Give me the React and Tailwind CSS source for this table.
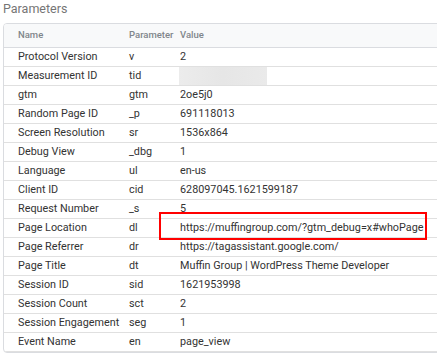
export default function App() {
  const rows = [
    ["Protocol Version", "v", "2"],
    ["Measurement ID", "tid", null],
    ["gtm", "gtm", "2oe5j0"],
    ["Random Page ID", "_p", "691118013"],
    ["Screen Resolution", "sr", "1536x864"],
    ["Debug View", "_dbg", "1"],
    ["Language", "ul", "en-us"],
    ["Client ID", "cid", "628097045.1621599187"],
    ["Request Number", "_s", "5"],
    ["Page Location", "dl", "https://muffingroup.com/?gtm_debug=x#whoPage"],
    ["Page Referrer", "dr", "https://tagassistant.google.com/"],
    ["Page Title", "dt", "Muffin Group | WordPress Theme Developer"],
    ["Session ID", "sid", "1621953998"],
    ["Session Count", "sct", "2"],
    ["Session Engagement", "seg", "1"],
    ["Event Name", "en", "page_view"],
  ];
  return (
    <div
      className="relative w-[437px] h-[354px] overflow-hidden bg-white"
      style={{ fontFamily: "Roboto, 'Noto Sans', sans-serif" }}
    >
      <div className="pl-[3px] pt-[1px] h-[23px] text-[12.5px] leading-[16px] text-[#757575]">
        Parameters
      </div>
      <div className="ml-[3px] w-[440px] border border-[#dadce0] rounded-[4px] overflow-hidden">
        <div className="grid grid-cols-[111px_51px_1fr] pl-[14px] h-[24px] items-center bg-[#f8f9fa] border-b border-[#dadce0] text-[9.5px] font-medium text-[#80868b]">
          <div>Name</div>
          <div>Parameter</div>
          <div>Value</div>
        </div>
        {rows.map(([n, p, v]) => (
          <div
            key={n}
            className="grid grid-cols-[111px_51px_1fr] pl-[14px] h-[19px] items-center border-b border-[#e0e0e0] text-[10.8px] text-[#333333] whitespace-nowrap"
          >
            <div>{n}</div>
            <div>{p}</div>
            <div className="flex items-center h-full">
              {v === null ? (
                <div className="ml-[-1px] w-[88px] h-[18px] bg-gradient-to-r from-[#ececec] via-[#e6e6e6] to-[#eaeaea]" />
              ) : (
                v
              )}
            </div>
          </div>
        ))}
      </div>
      <div className="absolute left-[159px] top-[212px] w-[268px] h-[28px] border-2 border-[#ff0000]" />
    </div>
  );
}
